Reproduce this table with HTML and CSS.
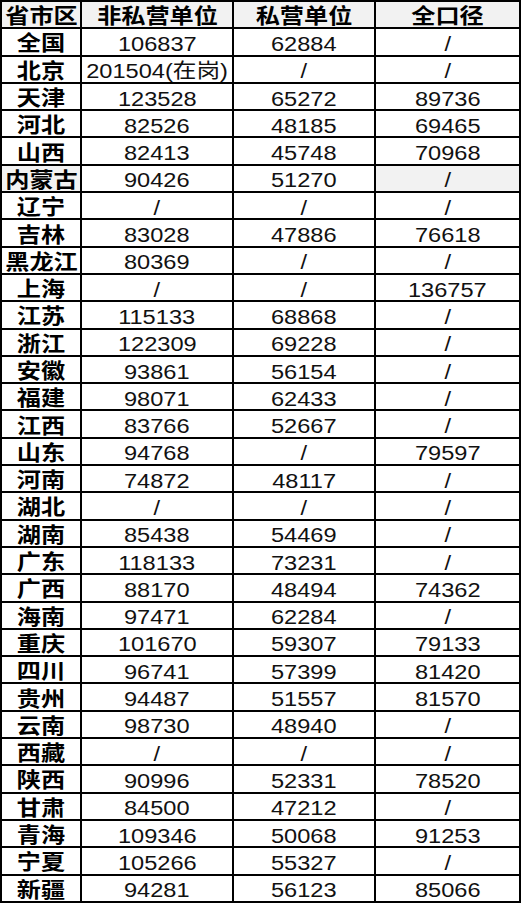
FILE: index.html
```html
<!DOCTYPE html>
<html lang="zh">
<head>
<meta charset="utf-8">
<title>平均工资</title>
<link rel="stylesheet" href="styles.css">
</head>
<body>
<table class="wage">
  <colgroup>
    <col class="c1"><col class="c2"><col class="c3"><col class="c4">
  </colgroup>
  <thead>
    <tr><th><span>省市区</span></th><th><span>非私营单位</span></th><th><span>私营单位</span></th><th><span>全口径</span></th></tr>
  </thead>
  <tbody>
    <tr><th><span>全国</span></th><td><span>106837</span></td><td><span>62884</span></td><td><span>/</span></td></tr>
    <tr><th><span>北京</span></th><td><span>201504(在岗)</span></td><td><span>/</span></td><td><span>/</span></td></tr>
    <tr><th><span>天津</span></th><td><span>123528</span></td><td><span>65272</span></td><td><span>89736</span></td></tr>
    <tr><th><span>河北</span></th><td><span>82526</span></td><td><span>48185</span></td><td><span>69465</span></td></tr>
    <tr><th><span>山西</span></th><td><span>82413</span></td><td><span>45748</span></td><td><span>70968</span></td></tr>
    <tr><th class="shade"><span>内蒙古</span></th><td><span>90426</span></td><td><span>51270</span></td><td class="shade"><span>/</span></td></tr>
    <tr><th><span>辽宁</span></th><td><span>/</span></td><td><span>/</span></td><td><span>/</span></td></tr>
    <tr><th><span>吉林</span></th><td><span>83028</span></td><td><span>47886</span></td><td><span>76618</span></td></tr>
    <tr><th><span>黑龙江</span></th><td><span>80369</span></td><td><span>/</span></td><td><span>/</span></td></tr>
    <tr><th><span>上海</span></th><td><span>/</span></td><td><span>/</span></td><td><span>136757</span></td></tr>
    <tr><th><span>江苏</span></th><td><span>115133</span></td><td><span>68868</span></td><td><span>/</span></td></tr>
    <tr><th><span>浙江</span></th><td><span>122309</span></td><td><span>69228</span></td><td><span>/</span></td></tr>
    <tr><th><span>安徽</span></th><td><span>93861</span></td><td><span>56154</span></td><td><span>/</span></td></tr>
    <tr><th><span>福建</span></th><td><span>98071</span></td><td><span>62433</span></td><td><span>/</span></td></tr>
    <tr><th><span>江西</span></th><td><span>83766</span></td><td><span>52667</span></td><td><span>/</span></td></tr>
    <tr><th><span>山东</span></th><td><span>94768</span></td><td><span>/</span></td><td><span>79597</span></td></tr>
    <tr><th><span>河南</span></th><td><span>74872</span></td><td><span>48117</span></td><td><span>/</span></td></tr>
    <tr><th><span>湖北</span></th><td><span>/</span></td><td><span>/</span></td><td><span>/</span></td></tr>
    <tr><th><span>湖南</span></th><td><span>85438</span></td><td><span>54469</span></td><td><span>/</span></td></tr>
    <tr><th><span>广东</span></th><td><span>118133</span></td><td><span>73231</span></td><td><span>/</span></td></tr>
    <tr><th><span>广西</span></th><td><span>88170</span></td><td><span>48494</span></td><td><span>74362</span></td></tr>
    <tr><th><span>海南</span></th><td><span>97471</span></td><td><span>62284</span></td><td><span>/</span></td></tr>
    <tr><th><span>重庆</span></th><td><span>101670</span></td><td><span>59307</span></td><td><span>79133</span></td></tr>
    <tr><th><span>四川</span></th><td><span>96741</span></td><td><span>57399</span></td><td><span>81420</span></td></tr>
    <tr><th><span>贵州</span></th><td><span>94487</span></td><td><span>51557</span></td><td><span>81570</span></td></tr>
    <tr><th><span>云南</span></th><td><span>98730</span></td><td><span>48940</span></td><td><span>/</span></td></tr>
    <tr><th><span>西藏</span></th><td><span>/</span></td><td><span>/</span></td><td><span>/</span></td></tr>
    <tr><th><span>陕西</span></th><td><span>90996</span></td><td><span>52331</span></td><td><span>78520</span></td></tr>
    <tr><th><span>甘肃</span></th><td><span>84500</span></td><td><span>47212</span></td><td><span>/</span></td></tr>
    <tr><th><span>青海</span></th><td><span>109346</span></td><td><span>50068</span></td><td><span>91253</span></td></tr>
    <tr><th><span>宁夏</span></th><td><span>105266</span></td><td><span>55327</span></td><td><span>/</span></td></tr>
    <tr><th><span>新疆</span></th><td><span>94281</span></td><td><span>56123</span></td><td><span>85066</span></td></tr>
  </tbody>
</table>
</body>
</html>
```

FILE: styles.css
```css
html, body {
  margin: 0;
  padding: 0;
  background: #ffffff;
}

.wage {
  border-collapse: collapse;
  table-layout: fixed;
  width: 521px;
  font-family: "Liberation Sans", "Noto Sans CJK SC", sans-serif;
  color: #111111;
}

.c1 { width: 80px; }
.c2 { width: 152px; }
.c3 { width: 142px; }
.c4 { width: 145px; }

.wage th,
.wage td {
  border: 2px solid #000000;
  padding: 0;
  height: 25.3px;
  text-align: center;
  vertical-align: middle;
  line-height: 1;
  white-space: nowrap;
  overflow: visible;
}

.wage td {
  font-size: 20px;
  font-weight: normal;
}

.wage td span {
  display: inline-block;
  transform: translateY(1.5px) scaleX(1.18);
}

.wage th {
  font-size: 21px;
  font-weight: bold;
  color: #000000;
}

.wage th span {
  display: inline-block;
  transform: translateY(1px) scaleX(1.15);
}

.wage thead th {
  background: #f2f2f2;
}

.wage .shade {
  background: #f2f2f2;
}
```
